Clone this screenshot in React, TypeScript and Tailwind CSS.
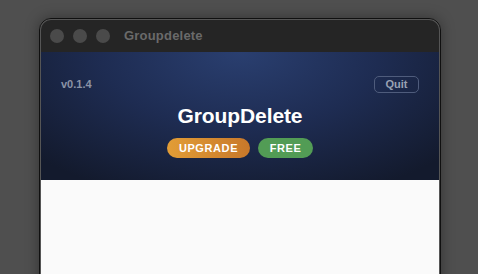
import React from "react";

const App = () => {
  return (
    <div
      className="w-[478px] h-[274px] overflow-hidden bg-[#4f4f4f] pt-[18px] pl-[39px]"
      style={{ fontFamily: '"Liberation Sans", Arial, sans-serif' }}
    >
      <div className="w-[402px] h-[300px] rounded-t-[12px] border border-[#101010] overflow-hidden shadow-[0_0_14px_rgba(0,0,0,0.35)]">
        <div className="h-full rounded-t-[11px] border-t border-x border-[#5a5a5a]/60 flex flex-col overflow-hidden">
          <div className="h-[32px] bg-[#252525] flex items-center pl-[9px]">
            <div className="flex gap-[9px]">
              <div className="w-[14px] h-[14px] rounded-full bg-[#4a4a4a]" />
              <div className="w-[14px] h-[14px] rounded-full bg-[#4a4a4a]" />
              <div className="w-[14px] h-[14px] rounded-full bg-[#4a4a4a]" />
            </div>
            <span className="ml-[14px] text-[13px] font-bold text-[#6a6a6a] tracking-[0.2px]">
              Groupdelete
            </span>
          </div>
          <div className="h-[128px] bg-[radial-gradient(ellipse_70%_120%_at_50%_0%,#2a3f70_0%,#1e2c52_50%,#131a2d_100%)] flex flex-col items-center pt-[24px] px-[20px]">
            <div className="w-full h-[17px] flex items-center justify-between">
              <span className="text-[11px] font-bold text-[#8b93a6]">v0.1.4</span>
              <button className="w-[45px] h-[17px] rounded-[5px] border border-[#4f5c7c] text-[11px] font-bold text-[#9aa2b4] leading-none">
                Quit
              </button>
            </div>
            <h1 className="mt-[10px] text-[21px] leading-[25px] font-bold text-white tracking-[-0.1px]">
              GroupDelete
            </h1>
            <div className="mt-[10px] flex gap-[8px]">
              <span className="w-[83px] h-[20px] rounded-full bg-gradient-to-r from-[#e29d36] to-[#c8782a] text-white text-[11px] font-bold tracking-[0.6px] flex items-center justify-center">
                UPGRADE
              </span>
              <span className="w-[55px] h-[20px] rounded-full bg-[#529c55] text-white text-[11px] font-bold tracking-[0.6px] flex items-center justify-center">
                FREE
              </span>
            </div>
          </div>
          <div className="flex-1 bg-[#fafafa]" />
        </div>
      </div>
    </div>
  );
};

export default App;
